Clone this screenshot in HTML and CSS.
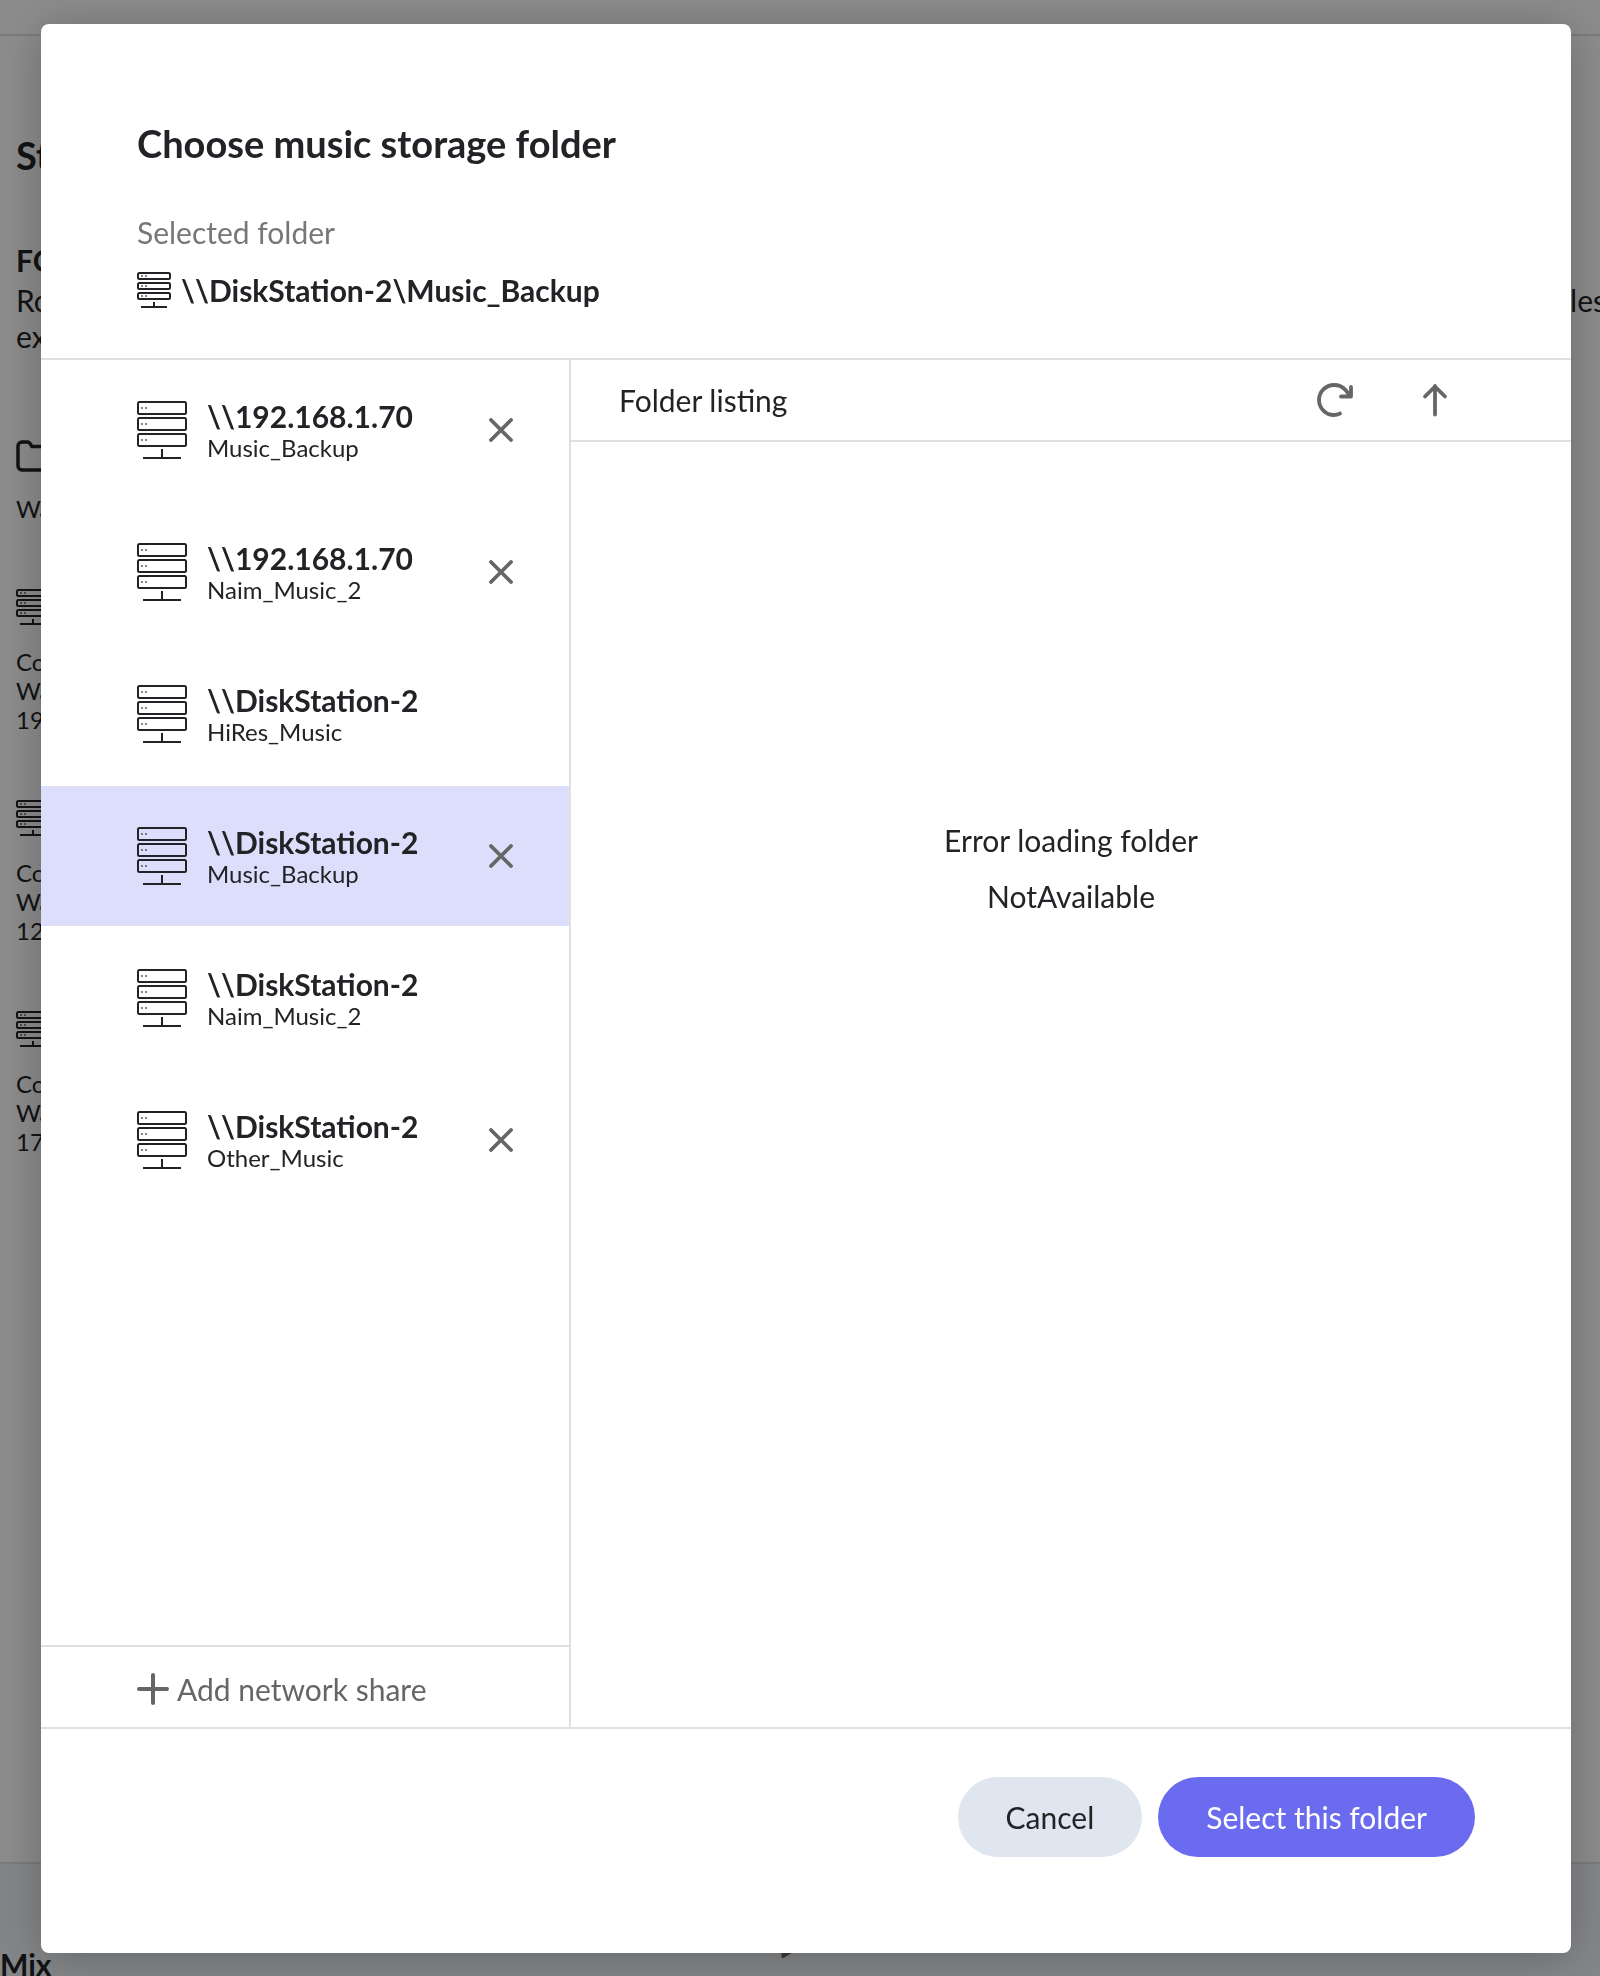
FILE: index.html
```
<!DOCTYPE html>
<html lang="en">
<head>
<meta charset="utf-8">
<meta name="viewport" content="width=device-width, initial-scale=1">
<title>Choose music storage folder</title>
<link rel="stylesheet" href="styles.css">
</head>
<body>
<svg class="defs" aria-hidden="true">
  <symbol id="server" viewBox="0 0 50 58">
    <g fill="none" stroke="currentColor" stroke-width="2">
      <rect x="1" y="1" width="48" height="12" rx="1.5"/>
      <rect x="1" y="17" width="48" height="12" rx="1.5"/>
      <rect x="1" y="33" width="48" height="12" rx="1.5"/>
      <path d="M25 48v9M6 57h38"/>
    </g>
    <path fill="currentColor" opacity=".55" d="M4 6h2v2h-2zM8 6h2v2h-2zM4 22h2v2h-2zM8 22h2v2h-2zM4 38h2v2h-2zM8 38h2v2h-2z"/>
  </symbol>
  <symbol id="server-small" viewBox="0 0 34 36">
    <g fill="none" stroke="currentColor" stroke-width="2">
      <rect x="1" y="1" width="32" height="6" rx="1.5"/>
      <rect x="1" y="11" width="32" height="6" rx="1.5"/>
      <rect x="1" y="21" width="32" height="6" rx="1.5"/>
      <path d="M17 30v5M4 35h26"/>
    </g>
    <path fill="currentColor" opacity=".55" d="M4 3h2v2h-2zM8 3h2v2h-2zM4 13h2v2h-2zM8 13h2v2h-2zM4 23h2v2h-2zM8 23h2v2h-2z"/>
  </symbol>
  <symbol id="close" viewBox="0 0 24 24">
    <path d="M2 2l20 20M22 2L2 22" fill="none" stroke="currentColor" stroke-width="3.800" stroke-linecap="round"/>
  </symbol>
</svg>

<div class="page">
  <div class="topbar"></div>
  <main class="settings">
    <h1 class="settings-title">St</h1>
    <h2 class="settings-heading">FO</h2>
    <div class="settings-intro"><p>Ro<br>ex</p><p>les</p></div>
    <section class="watched">
      <svg class="folder-icon" viewBox="0 0 38 32" aria-hidden="true"><path d="M2 26V6a4 4 0 0 1 4-4h5.500q1.500 0 2.500 1.500l2 3h16a4 4 0 0 1 4 4V26a4 4 0 0 1-4 4H6a4 4 0 0 1-4-4z" fill="none" stroke="currentColor" stroke-width="3.500"/></svg>
      <p class="note">Wa</p>
    </section>
    <section class="location">
      <svg class="icon-small" aria-hidden="true"><use href="#server-small"/></svg>
      <p class="note">Co<br>Wa<br>19</p>
    </section>
    <section class="location">
      <svg class="icon-small" aria-hidden="true"><use href="#server-small"/></svg>
      <p class="note">Co<br>Wa<br>12</p>
    </section>
    <section class="location">
      <svg class="icon-small" aria-hidden="true"><use href="#server-small"/></svg>
      <p class="note">Co<br>Wa<br>17</p>
    </section>
  </main>
  <footer class="player">
    <p class="track">Mix</p>
    <svg class="play" viewBox="0 0 38 44" aria-hidden="true"><path d="M2 1.500v41L36.500 22z" fill="currentColor" stroke="currentColor" stroke-width="3" stroke-linejoin="round"/></svg>
  </footer>
</div>

<div class="overlay">
  <div class="dialog" role="dialog" aria-modal="true" aria-labelledby="dialog-title">
    <header class="dialog-head">
      <h2 class="dialog-title" id="dialog-title">Choose music storage folder</h2>
      <p class="label">Selected folder</p>
      <p class="selected"><svg class="icon-small" aria-hidden="true"><use href="#server-small"/></svg><span>\\DiskStation-2\Music_Backup</span></p>
    </header>
    <div class="browser">
      <aside class="sidebar">
        <ul class="shares">
          <li class="share">
            <button class="share-open" type="button"><svg class="icon" aria-hidden="true"><use href="#server"/></svg><span class="share-text"><span class="host">\\192.168.1.70</span><span class="folder">Music_Backup</span></span></button>
            <button class="remove" type="button" aria-label="Remove"><svg class="close" aria-hidden="true"><use href="#close"/></svg></button>
          </li>
          <li class="share">
            <button class="share-open" type="button"><svg class="icon" aria-hidden="true"><use href="#server"/></svg><span class="share-text"><span class="host">\\192.168.1.70</span><span class="folder">Naim_Music_2</span></span></button>
            <button class="remove" type="button" aria-label="Remove"><svg class="close" aria-hidden="true"><use href="#close"/></svg></button>
          </li>
          <li class="share">
            <button class="share-open" type="button"><svg class="icon" aria-hidden="true"><use href="#server"/></svg><span class="share-text"><span class="host">\\DiskStation-2</span><span class="folder">HiRes_Music</span></span></button>
          </li>
          <li class="share is-selected">
            <button class="share-open" type="button"><svg class="icon" aria-hidden="true"><use href="#server"/></svg><span class="share-text"><span class="host">\\DiskStation-2</span><span class="folder">Music_Backup</span></span></button>
            <button class="remove" type="button" aria-label="Remove"><svg class="close" aria-hidden="true"><use href="#close"/></svg></button>
          </li>
          <li class="share">
            <button class="share-open" type="button"><svg class="icon" aria-hidden="true"><use href="#server"/></svg><span class="share-text"><span class="host">\\DiskStation-2</span><span class="folder">Naim_Music_2</span></span></button>
          </li>
          <li class="share">
            <button class="share-open" type="button"><svg class="icon" aria-hidden="true"><use href="#server"/></svg><span class="share-text"><span class="host">\\DiskStation-2</span><span class="folder">Other_Music</span></span></button>
            <button class="remove" type="button" aria-label="Remove"><svg class="close" aria-hidden="true"><use href="#close"/></svg></button>
          </li>
        </ul>
        <button class="add" type="button">
          <svg class="plus" viewBox="0 0 32 32" aria-hidden="true"><path d="M16 2v28M2 16h28" fill="none" stroke="currentColor" stroke-width="4" stroke-linecap="round"/></svg>
          Add network share
        </button>
      </aside>
      <section class="listing">
        <div class="listing-head">
          <h3 class="listing-title">Folder listing</h3>
          <button class="tool" type="button" aria-label="Refresh"><svg class="refresh" viewBox="0 0 38 36" aria-hidden="true"><path d="M24 31.500C22 32.500 20 33 18 33A15 15 0 0 1 18 3C23 3 27 5 29.500 8L34.500 14M35 5v9.500H25" fill="none" stroke="currentColor" stroke-width="3.800" stroke-linecap="round" stroke-linejoin="round"/></svg></button>
          <button class="tool" type="button" aria-label="Up one folder"><svg class="up" viewBox="0 0 26 34" aria-hidden="true"><path d="M13 31.500V3M3 13.500L13 3.500 23 13.500" fill="none" stroke="currentColor" stroke-width="3.800" stroke-linecap="round" stroke-linejoin="round"/></svg></button>
        </div>
        <div class="message">
          <p>Error loading folder</p>
          <p>NotAvailable</p>
        </div>
      </section>
    </div>
    <footer class="actions">
      <button class="btn btn-cancel" type="button">Cancel</button>
      <button class="btn btn-primary" type="button">Select this folder</button>
    </footer>
  </div>
</div>
</body>
</html>
```
FILE: styles.css
```
* { box-sizing: border-box; }

html, body { height: 100%; }

body {
  margin: 0;
  font-family: Lato, "Open Sans", sans-serif;
  font-size: 30px;
  line-height: 36px;
  color: #222326;
  background: #fff;
  overflow: hidden;
}

h1, h2, h3, p, ul { margin: 0; padding: 0; }
h1, h2 { font-weight: 700; }
svg { display: block; flex: none; }

button {
  margin: 0;
  padding: 0;
  border: 0;
  background: none;
  font: inherit;
  color: inherit;
  text-align: left;
  cursor: pointer;
}

.defs { position: absolute; width: 0; height: 0; }

/* Settings page behind the dialog */
.page {
  display: flex;
  flex-direction: column;
  height: 100vh;
  overflow: hidden;
}

.topbar { flex: none; height: 36px; border-bottom: 2px solid #e0e0e0; }

.settings { flex: 1; min-height: 0; padding: 96px 0 0 16px; }
.settings-title { font-size: 38px; line-height: 46px; margin-bottom: 64px; }
.settings-heading { font-size: 30px; line-height: 36px; margin-bottom: 4px; }
.settings-intro { display: flex; justify-content: space-between; margin: 0 -6px 86px 0; }
.settings .note { font-size: 24px; line-height: 29px; }
.watched { margin-bottom: 66px; }
.folder-icon { width: 38px; height: 32px; margin-bottom: 22px; }
.location { margin-bottom: 66px; }
.location .icon-small { margin-bottom: 22px; }

.player {
  flex: none;
  display: flex;
  justify-content: space-between;
  align-items: flex-end;
  height: 114px;
  padding-right: 781px;
  border-top: 2px solid #e0e0e0;
  background: #f0f3f6;
}
.track { font-weight: 700; line-height: 24px; }
.play { width: 38px; height: 44px; margin-bottom: 18px; color: #666; }

/* Dialog */
.overlay {
  position: fixed;
  inset: 0;
  display: flex;
  padding: 24px 29px 23px 41px;
  background: rgba(0, 0, 0, .45);
}

.dialog {
  flex: 1;
  display: flex;
  flex-direction: column;
  min-width: 0;
  border-radius: 8px;
  background: #fff;
  box-shadow: 0 4px 48px rgba(0, 0, 0, .25);
  overflow: hidden;
}

.dialog-head { padding: 96px 96px 50px; border-bottom: 2px solid #e0e0e0; }
.dialog-title { font-size: 38px; line-height: 46px; margin-bottom: 48px; }
.label { color: #777; margin-bottom: 22px; }
.selected { display: flex; align-items: center; gap: 10px; font-weight: 700; }

.icon-small { width: 34px; height: 36px; }
.icon { width: 50px; height: 58px; }

.browser { flex: 1; display: flex; min-height: 0; }

.sidebar {
  flex: none;
  display: flex;
  flex-direction: column;
  width: 530px;
  border-right: 2px solid #e0e0e0;
}

.shares {
  flex: 1;
  display: flex;
  flex-direction: column;
  gap: 2px;
  min-height: 0;
  list-style: none;
  overflow: hidden;
}

.share { flex: none; display: flex; align-items: center; height: 140px; padding: 0 56px 0 96px; }
.share.is-selected { background: #dddefb; }
.share-open { flex: 1; display: flex; align-items: center; gap: 20px; }
.share-text { display: flex; flex-direction: column; }
.host { font-weight: 700; }
.folder { font-size: 24px; line-height: 28px; }
.remove { color: #666; }
.close { width: 24px; height: 24px; }

.add {
  display: flex;
  align-items: center;
  gap: 8px;
  height: 82px;
  padding: 4px 0 0 96px;
  border-top: 2px solid #e0e0e0;
  color: #666;
}
.plus { width: 32px; height: 32px; }

.listing { flex: 1; display: flex; flex-direction: column; min-width: 0; }
.listing-head {
  display: flex;
  align-items: center;
  gap: 68px;
  height: 82px;
  padding: 0 123px 0 48px;
  border-bottom: 2px solid #e0e0e0;
}
.listing-title { flex: 1; font-size: 30px; font-weight: 400; }
.tool { color: #666; }
.refresh { width: 38px; height: 36px; }
.up { width: 26px; height: 34px; }

.message {
  display: flex;
  flex-direction: column;
  gap: 20px;
  padding: 380px 48px 0;
  text-align: center;
}

.actions {
  display: flex;
  justify-content: flex-end;
  gap: 16px;
  padding: 48px 96px 96px;
  border-top: 2px solid #e0e0e0;
}
.btn { height: 80px; padding: 0 48px; border-radius: 40px; }
.btn-cancel { background: #e0e6f0; }
.btn-primary { background: #6b6bf0; color: #fff; }
```
